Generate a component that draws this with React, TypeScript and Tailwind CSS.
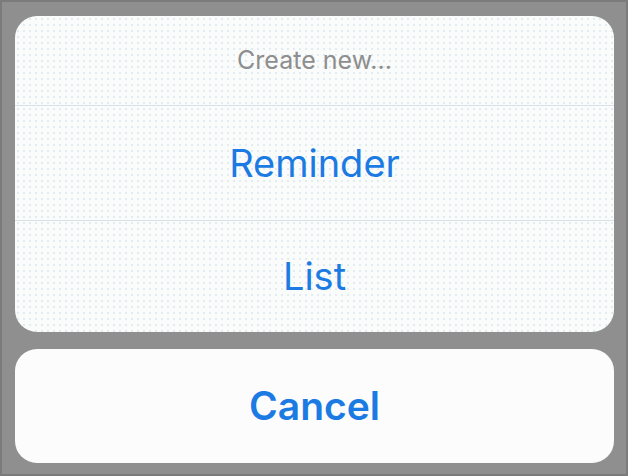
export default function App() {
  return (
    <div className="w-[628px] h-[476px] bg-[#8f8f8f] border-2 border-[#7b7b7b] pl-[13px] pr-[12px] pt-[14px] flex flex-col" style={{ fontFamily: "Inter, 'Noto Sans', sans-serif" }}>
      <div className="rounded-[22px] overflow-hidden bg-[#fafbfb] bg-[radial-gradient(circle,#d6e3e9_0.6px,transparent_0.9px)] bg-[length:6px_6px] flex flex-col">
        <div className="h-[89px] flex items-center justify-center text-[25px] text-[#8e8e8e]">Create new...</div>
        <div className="h-px bg-[#d5e2ea]" />
        <div className="h-[114px] flex items-center justify-center text-[38px] text-[#1b7be3]">Reminder</div>
        <div className="h-px bg-[#d5e2ea]" />
        <div className="h-[111px] flex items-center justify-center text-[38px] text-[#1b7be3]">List</div>
      </div>
      <div className="mt-[17px] h-[114px] rounded-[22px] bg-[#fcfcfc] flex items-center justify-center text-[39px] font-semibold text-[#1b7be3]">Cancel</div>
    </div>
  );
}
